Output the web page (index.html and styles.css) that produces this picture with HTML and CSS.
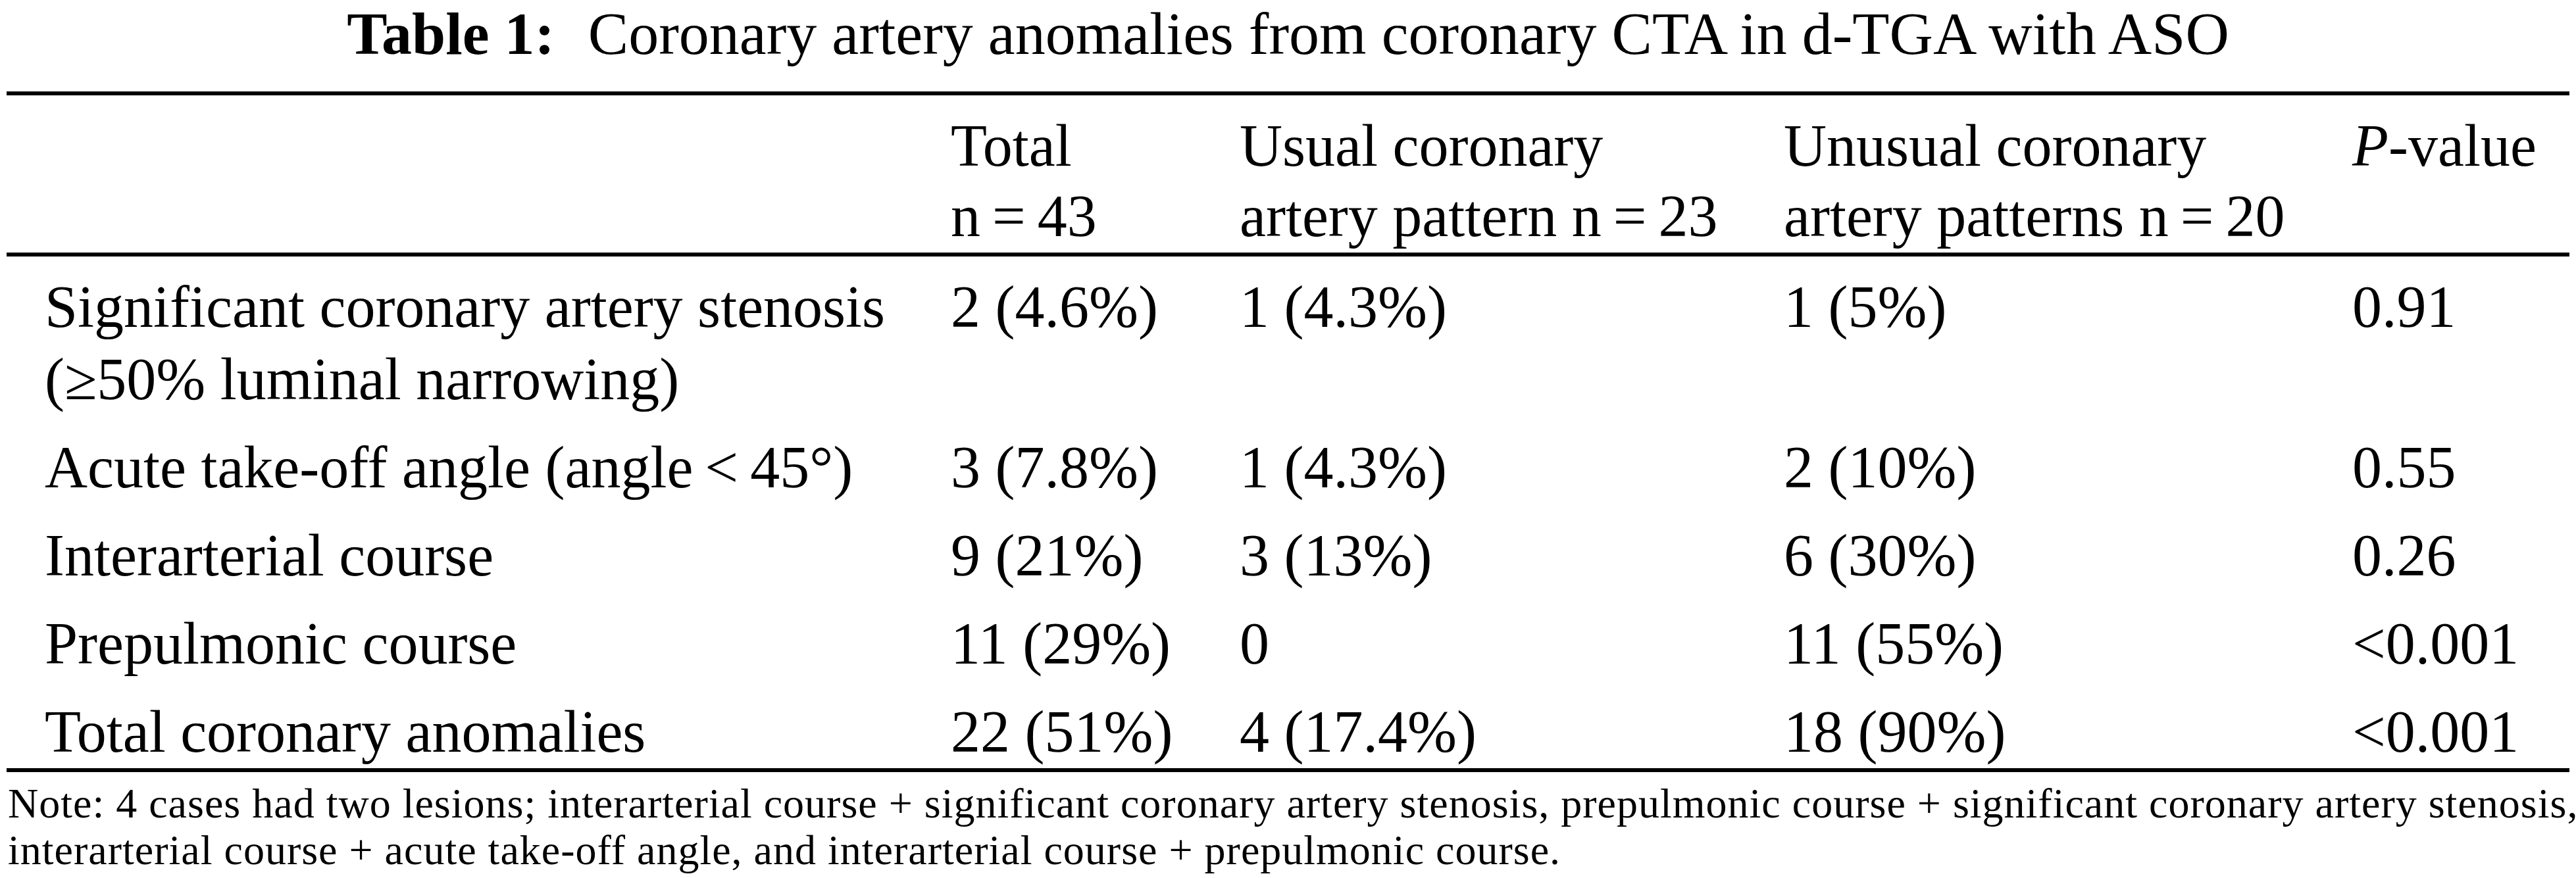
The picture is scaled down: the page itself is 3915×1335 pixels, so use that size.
FILE: index.html
```html
<!DOCTYPE html>
<html lang="en">
<head>
<meta charset="utf-8">
<title>Table 1</title>
<link rel="stylesheet" href="styles.css">
</head>
<body>
<div class="page">
  <h1 class="title"><span class="label">Table 1:</span> Coronary artery anomalies from coronary CTA in d-TGA with ASO</h1>
  <table class="data">
    <colgroup>
      <col class="c0"><col class="c1"><col class="c2"><col class="c3"><col class="c4">
    </colgroup>
    <thead>
      <tr>
        <th></th>
        <th>Total<br>n&#8201;=&#8201;43</th>
        <th>Usual coronary<br>artery pattern n&#8201;=&#8201;23</th>
        <th>Unusual coronary<br>artery patterns n&#8201;=&#8201;20</th>
        <th><i>P</i>-value</th>
      </tr>
    </thead>
    <tbody>
      <tr class="first">
        <td>Significant coronary artery stenosis<br>(≥50% luminal narrowing)</td>
        <td>2 (4.6%)</td>
        <td>1 (4.3%)</td>
        <td>1 (5%)</td>
        <td>0.91</td>
      </tr>
      <tr>
        <td>Acute take-off angle (angle&#8201;&lt;&#8201;45°)</td>
        <td>3 (7.8%)</td>
        <td>1 (4.3%)</td>
        <td>2 (10%)</td>
        <td>0.55</td>
      </tr>
      <tr>
        <td>Interarterial course</td>
        <td>9 (21%)</td>
        <td>3 (13%)</td>
        <td>6 (30%)</td>
        <td>0.26</td>
      </tr>
      <tr>
        <td>Prepulmonic course</td>
        <td>11 (29%)</td>
        <td>0</td>
        <td>11 (55%)</td>
        <td>&lt;0.001</td>
      </tr>
      <tr>
        <td>Total coronary anomalies</td>
        <td>22 (51%)</td>
        <td>4 (17.4%)</td>
        <td>18 (90%)</td>
        <td>&lt;0.001</td>
      </tr>
    </tbody>
  </table>
  <p class="note">Note: 4 cases had two lesions; interarterial course + significant coronary artery stenosis, prepulmonic course + significant coronary artery stenosis,<br>interarterial course + acute take-off angle, and interarterial course + prepulmonic course.</p>
</div>
</body>
</html>
```

FILE: styles.css
```css
html, body {
  margin: 0;
  padding: 0;
  background: #ffffff;
  color: #000000;
}

.page {
  padding: 0 10px;
  font-family: "Liberation Serif", "Times New Roman", serif;
}

.title {
  margin: 0 0 37px 0;
  font-size: 92px;
  line-height: 102px;
  font-weight: normal;
  text-align: center;
  white-space: nowrap;
}

.title .label {
  font-weight: bold;
  margin-right: 0.3em;
}

.data {
  width: 100%;
  table-layout: fixed;
  border-collapse: separate;
  border-spacing: 0;
  border-top: 6px solid #000;
  border-bottom: 6px solid #000;
  font-size: 90px;
}

.c0 { width: 1435px; }
.c1 { width: 439px; }
.c2 { width: 827px; }
.c3 { width: 864px; }
.c4 { width: 330px; }

.data th,
.data td {
  padding: 0;
  text-align: left;
  vertical-align: top;
  font-weight: normal;
  white-space: nowrap;
}

.data th {
  line-height: 107px;
  padding-top: 23px;
  padding-bottom: 2px;
  border-bottom: 6px solid #000;
}

.data td {
  line-height: 110px;
  padding-top: 24px;
}

.data tr.first td {
  padding-top: 22px;
}

.data th:first-child,
.data td:first-child {
  padding-left: 58px;
}

.note {
  margin: 12px 0 0 2px;
  font-size: 64px;
  letter-spacing: 1px;
  line-height: 71px;
  white-space: nowrap;
}
```
